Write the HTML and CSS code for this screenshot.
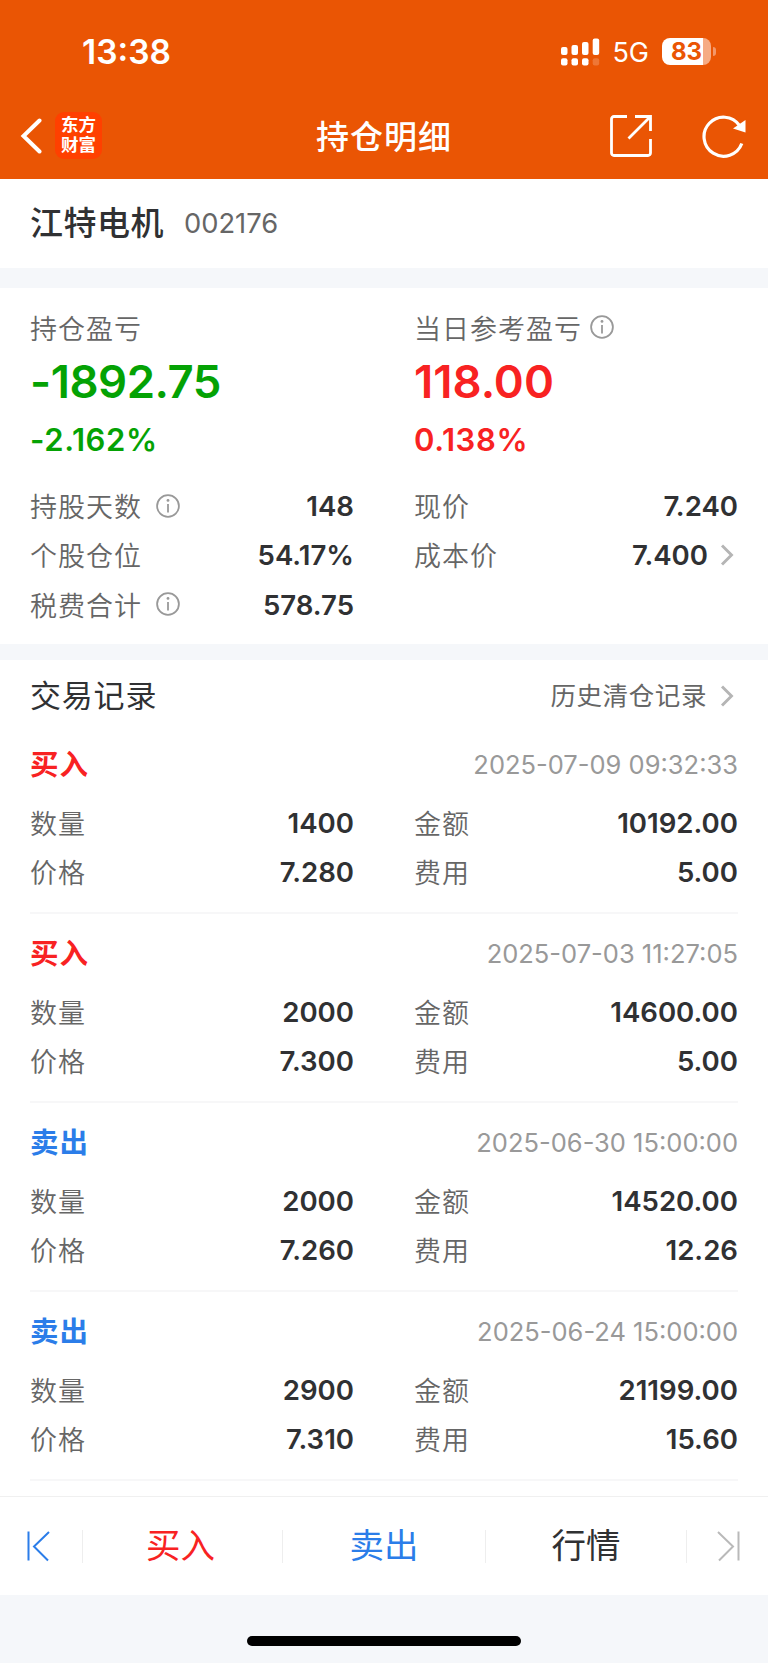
FILE: index.html
```html
<!DOCTYPE html>
<html lang="zh-CN">
  <head>
    <meta charset="utf-8" />
    <title>持仓明细</title>
    <meta name="viewport" content="width=device-width, initial-scale=1" />
    <link rel="stylesheet" href="styles.css">
  </head>
  <body>
    <header class="header">
      <div class="status">
        <span class="time">13:38</span>
        <div class="status-right">
          <svg class="signal" width="39" height="28" viewBox="0 0 39 28" fill="#fff">
            <rect x="0" y="9" width="6.5" height="8" rx="2" />
            <rect x="10.5" y="7" width="6.5" height="10" rx="2" />
            <rect x="21" y="4" width="6.5" height="13" rx="2" />
            <rect x="31.7" y="0.5" width="6.5" height="16.5" rx="2" />
            <rect x="0" y="20.3" width="6.5" height="7.2" rx="2" />
            <rect x="10.5" y="20.3" width="6.5" height="7.2" rx="2" />
            <rect x="21" y="20.3" width="6.5" height="7.2" rx="2" />
            <rect x="31.7" y="20.3" width="6.5" height="7.2" rx="2" opacity="0.2" />
          </svg>
          <span class="network">5G</span>
          <span class="battery">83</span>
          <span class="battery-tip"></span>
        </div>
      </div>
      <div class="navbar">
        <div class="nav-left">
          <svg width="22" height="36" viewBox="0 0 22 36" fill="none" stroke="#fff" stroke-width="4" stroke-linecap="round">
            <path d="M19.5 2.5 3.5 18l16 15.5" />
          </svg>
          <div class="logo">东方<br />财富</div>
        </div>
        <h1 class="title">持仓明细</h1>
        <div class="nav-right">
          <svg width="42" height="42" viewBox="0 0 42 42" fill="none" stroke="#fff" stroke-width="2.8">
            <path d="M17 1.5H4a2.5 2.5 0 0 0-2.5 2.5v34a2.5 2.5 0 0 0 2.5 2.5h34a2.5 2.5 0 0 0 2.5-2.5V24" />
            <path d="M25 1.5h15.5V16M40 2 18.5 23.5" />
          </svg>
          <svg width="44" height="44" viewBox="0 0 44 44" fill="none" stroke="#fff" stroke-width="3.2">
            <path d="M39.8 29.5A19.5 19.5 0 1 1 37.5 11.5" />
            <path d="M43.5 6v12.5L31 14.5z" fill="#fff" stroke="none" />
          </svg>
        </div>
      </div>
    </header>

    <section class="stock">
      <h2>江特电机</h2>
      <span class="code">002176</span>
    </section>

    <section class="summary">
      <div class="columns">
        <div>
          <div class="label">持仓盈亏</div>
          <div class="amount green">-1892.75</div>
          <div class="percent green">-2.162%</div>
        </div>
        <div>
          <div class="label">
            当日参考盈亏
            <svg class="info near" width="24" height="24" viewBox="0 0 24 24"><circle cx="12" cy="12" r="10.9" /><path d="M12 10v8.5" /><circle class="dot" cx="12" cy="6.4" r="1.4" /></svg>
          </div>
          <div class="amount red">118.00</div>
          <div class="percent red">0.138%</div>
        </div>
      </div>
      <div class="columns details">
        <div class="item">
          <span class="label">
            持股天数
            <svg class="info" width="24" height="24" viewBox="0 0 24 24"><circle cx="12" cy="12" r="10.9" /><path d="M12 10v8.5" /><circle class="dot" cx="12" cy="6.4" r="1.4" /></svg>
          </span>
          <span class="value">148</span>
        </div>
        <div class="item"><span class="label">现价</span><span class="value">7.240</span></div>
        <div class="item"><span class="label">个股仓位</span><span class="value">54.17%</span></div>
        <div class="item">
          <span class="label">成本价</span>
          <span class="value">7.400<svg class="arrow" width="14" height="22" viewBox="0 0 14 22"><path d="M2 1.5 11.5 11 2 20.5" /></svg></span>
        </div>
        <div class="item">
          <span class="label">
            税费合计
            <svg class="info" width="24" height="24" viewBox="0 0 24 24"><circle cx="12" cy="12" r="10.9" /><path d="M12 10v8.5" /><circle class="dot" cx="12" cy="6.4" r="1.4" /></svg>
          </span>
          <span class="value">578.75</span>
        </div>
      </div>
    </section>

    <section class="records">
      <div class="records-head">
        <h3>交易记录</h3>
        <span class="history"><span>历史清仓记录</span><svg class="arrow" width="14" height="22" viewBox="0 0 14 22"><path d="M2 1.5 11.5 11 2 20.5" /></svg></span>
      </div>

      <div class="record">
        <div class="record-head"><span class="type red">买入</span><span class="date">2025-07-09 09:32:33</span></div>
        <div class="columns">
          <div class="item"><span class="label">数量</span><span class="value">1400</span></div>
          <div class="item"><span class="label">金额</span><span class="value">10192.00</span></div>
          <div class="item"><span class="label">价格</span><span class="value">7.280</span></div>
          <div class="item"><span class="label">费用</span><span class="value">5.00</span></div>
        </div>
      </div>

      <div class="record">
        <div class="record-head"><span class="type red">买入</span><span class="date">2025-07-03 11:27:05</span></div>
        <div class="columns">
          <div class="item"><span class="label">数量</span><span class="value">2000</span></div>
          <div class="item"><span class="label">金额</span><span class="value">14600.00</span></div>
          <div class="item"><span class="label">价格</span><span class="value">7.300</span></div>
          <div class="item"><span class="label">费用</span><span class="value">5.00</span></div>
        </div>
      </div>

      <div class="record">
        <div class="record-head"><span class="type blue">卖出</span><span class="date">2025-06-30 15:00:00</span></div>
        <div class="columns">
          <div class="item"><span class="label">数量</span><span class="value">2000</span></div>
          <div class="item"><span class="label">金额</span><span class="value">14520.00</span></div>
          <div class="item"><span class="label">价格</span><span class="value">7.260</span></div>
          <div class="item"><span class="label">费用</span><span class="value">12.26</span></div>
        </div>
      </div>

      <div class="record">
        <div class="record-head"><span class="type blue">卖出</span><span class="date">2025-06-24 15:00:00</span></div>
        <div class="columns">
          <div class="item"><span class="label">数量</span><span class="value">2900</span></div>
          <div class="item"><span class="label">金额</span><span class="value">21199.00</span></div>
          <div class="item"><span class="label">价格</span><span class="value">7.310</span></div>
          <div class="item"><span class="label">费用</span><span class="value">15.60</span></div>
        </div>
      </div>
    </section>

    <nav class="tabbar">
      <div class="tab-side prev">
        <svg width="24" height="32" viewBox="0 0 24 32" fill="none" stroke="#2b7de9" stroke-width="2">
          <path d="M2.5 1.5v29M23 2 8 16.5 22 30.5" />
        </svg>
      </div>
      <div class="tab buy red">买入</div>
      <div class="tab blue">卖出</div>
      <div class="tab quote">行情</div>
      <div class="tab-side next">
        <svg width="24" height="32" viewBox="0 0 24 32" fill="none" stroke="#b9b9b9" stroke-width="2">
          <path d="M21.5 1.5v29M1 2l15 14.5L2 30.5" />
        </svg>
      </div>
    </nav>
    <footer class="home"><div class="home-bar"></div></footer>
  </body>
</html>
```
FILE: styles.css
```css
* {
  box-sizing: border-box;
}

body {
  margin: 0;
  background-color: #f5f7fa;
  color: #303133;
  font-family: Inter, "Noto Sans CJK SC", sans-serif;
}

h1,
h2,
h3 {
  margin: 0;
}

/* header */
.header {
  height: 179px;
  background-color: #ea5504;
  color: white;
}

.status {
  height: 94px;
  padding: 9px 52px 0 82px;
  display: flex;
  justify-content: space-between;
  align-items: center;
}

.time {
  font-size: 33.5px;
  font-weight: 600;
}

.status-right {
  display: flex;
  align-items: center;
}

.network {
  margin: 1px 13px 0 12px;
  font-size: 27px;
}

.battery {
  width: 49px;
  height: 27px;
  border-radius: 8px;
  background: linear-gradient(to right, white 41px, #f6ab84 41px);
  color: #ea5504;
  font-size: 24px;
  font-weight: 700;
  line-height: 27px;
  text-align: center;
}

.battery-tip {
  width: 3px;
  height: 9px;
  margin-left: 2px;
  border-radius: 0 4px 4px 0;
  background-color: #f3976a;
}

.navbar {
  height: 85px;
  padding: 0 22px 2px 20px;
  display: grid;
  grid-template-columns: 1fr auto 1fr;
  align-items: center;
}

.nav-left,
.nav-right {
  display: flex;
  align-items: center;
}

.nav-left {
  gap: 13px;
}

.nav-right {
  justify-content: flex-end;
  gap: 50px;
}

.logo {
  width: 47px;
  height: 47px;
  padding-top: 3px;
  border-radius: 9px;
  background-color: #ff4000;
  font-size: 17.5px;
  font-weight: 700;
  line-height: 19.5px;
  text-align: center;
}

.title {
  padding: 0 0 2px 2px;
  font-size: 33px;
  font-weight: 500;
  letter-spacing: 1px;
}

/* stock name */
.stock {
  height: 89px;
  padding: 0 30px;
  display: flex;
  align-items: center;
  gap: 20px;
  background-color: white;
}

.stock h2 {
  padding-bottom: 5px;
  font-size: 33px;
  font-weight: 500;
  letter-spacing: 0.5px;
}

.code {
  color: #666;
  font-size: 27.3px;
}

/* summary */
.summary {
  height: 356px;
  margin-top: 20px;
  padding: 15px 30px 0;
  background-color: white;
}

.columns {
  display: grid;
  grid-template-columns: 1fr 1fr;
  column-gap: 60px;
}

.label {
  display: flex;
  align-items: center;
  height: 49px;
  padding-bottom: 1px;
  color: #666;
  font-size: 27px;
  letter-spacing: 1px;
  font-weight: 350;
}

.amount {
  height: 59px;
  font-size: 45.5px;
  font-weight: 600;
  line-height: 59px;
}

.amount.green {
  letter-spacing: -0.5px;
}

.percent {
  height: 56px;
  font-size: 31px;
  font-weight: 600;
  letter-spacing: 0.6px;
  line-height: 57px;
}

.info {
  margin: 0 0 0 14px;
  fill: none;
  stroke: #999;
  stroke-width: 1.8;
}

.info.near {
  margin-left: 8px;
}

.info .dot {
  fill: #999;
  stroke: none;
}

.details {
  margin-top: 14.5px;
}

.item {
  height: 49.3px;
  display: flex;
  justify-content: space-between;
  align-items: center;
}

.value {
  display: flex;
  align-items: center;
  font-size: 27.6px;
  font-weight: 600;
}

.arrow {
  margin: 0 4px 0 12px;
  fill: none;
  stroke: #b5b5b5;
  stroke-width: 2.9;
}

/* records */
.records {
  height: 836px;
  margin-top: 16px;
  padding: 0 30px;
  background-color: white;
}

.records-head {
  height: 65px;
  padding-top: 6px;
  display: flex;
  justify-content: space-between;
  align-items: center;
}

.records-head h3 {
  padding-bottom: 5px;
  font-size: 31px;
  font-weight: 400;
  letter-spacing: 0.8px;
}

.history {
  display: flex;
  align-items: center;
  color: #666;
  font-size: 25.5px;
  letter-spacing: 0.6px;
}

.history span {
  padding-bottom: 4px;
}

.history .arrow {
  margin-left: 13px;
}

.record {
  height: 189px;
  padding-top: 14px;
  border-bottom: 2px solid #f7f7f8;
}

.record-head {
  height: 59px;
  padding-bottom: 9px;
  display: flex;
  justify-content: space-between;
  align-items: center;
}

.type {
  padding-bottom: 3px;
  font-size: 28.5px;
  font-weight: 700;
  letter-spacing: 1px;
}

.date {
  color: #999;
  font-size: 25.5px;
}

/* bottom bar */
.tabbar {
  height: 99px;
  border-top: 1px solid #f0f0f0;
  display: flex;
  align-items: center;
  background-color: white;
}

.tab,
.tab-side {
  height: 33px;
  display: flex;
  align-items: center;
}

.tab {
  flex: 1;
  justify-content: center;
  padding-bottom: 6px;
  border-right: 1px solid #eee;
  font-size: 34.5px;
}

.buy {
  flex: none;
  width: 200px;
  padding-right: 4px;
}

.quote {
  flex: none;
  width: 201px;
}

.tab-side {
  width: 83px;
}

.prev {
  padding-left: 26px;
  border-right: 1px solid #eee;
}

.next {
  width: 81px;
  padding-left: 30px;
}

.home {
  height: 68px;
  padding-top: 41px;
}

.home-bar {
  width: 274px;
  height: 10px;
  margin: 0 auto;
  border-radius: 5px;
  background-color: black;
}

.red {
  color: #f82222;
}

.green {
  color: #04a204;
}

.blue {
  color: #2b7de9;
}
```
